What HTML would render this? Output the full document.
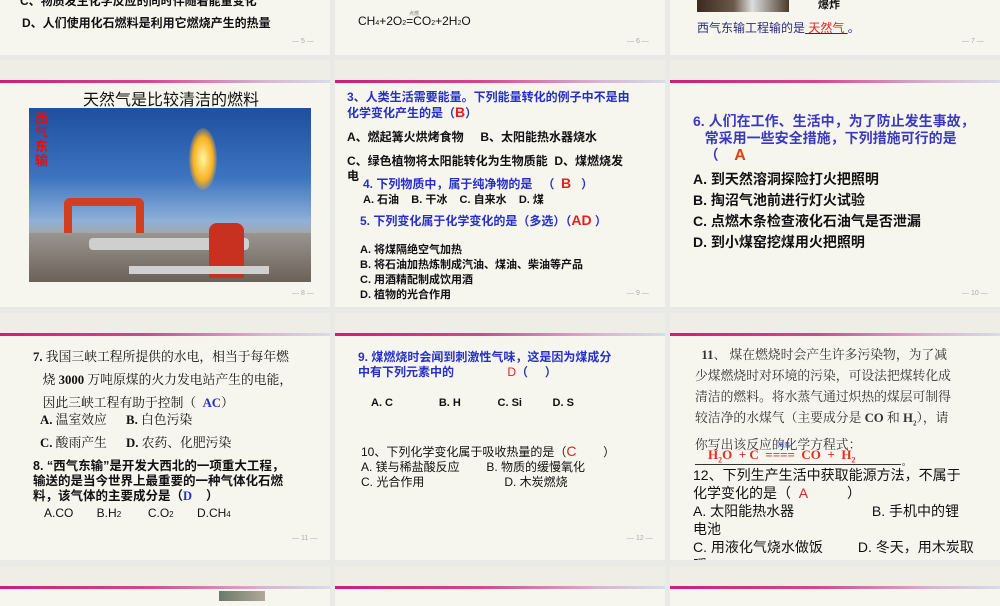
<!DOCTYPE html>
<html><head><meta charset="utf-8"><style>
*{margin:0;padding:0;box-sizing:border-box}
body{width:1000px;height:600px;background:#e9e9e5;position:relative;overflow:hidden;font-family:"Liberation Sans","Noto Sans CJK SC",sans-serif}
.s{position:absolute;background:#f7f6ee;overflow:hidden}
.top{position:absolute;left:0;right:0;top:0;background:#efeee6}
.bar{position:absolute;left:0;right:0;height:3px;background:linear-gradient(90deg,#d01c78 0%,#d2488f 45%,#d9b3d3 80%,#d9dbe8 100%)}
.t{position:absolute;white-space:nowrap;color:#111}
.b{font-weight:bold}
.blue{color:#2630c8}
.red{color:#e0201e}
.pg{position:absolute;font-size:7px;color:#aaa;white-space:nowrap}
.serif{font-family:"Liberation Serif","Noto Serif CJK SC",serif}
</style></head><body>

<!-- row 0 -->
<div class="s" style="left:0;top:0;width:330px;height:55px">
 <div class="t b" style="left:20px;top:-8px;font-size:12px">C、物质发生化学反应的同时伴随着能量变化</div>
 <div class="t b" style="left:22px;top:14px;font-size:12px">D、人们使用化石燃料是利用它燃烧产生的热量</div>
 <div class="pg" style="left:292px;top:38px">— 5 —</div>
</div>
<div class="s" style="left:335px;top:0;width:330px;height:55px">
 <div class="t" style="left:23px;top:14px;font-size:12px">CH<span style="font-size:7px">4</span>+2O<span style="font-size:7px">2</span>=CO<span style="font-size:7px">2</span>+2H<span style="font-size:7px">2</span>O</div>
 <div class="t" style="left:74px;top:10px;font-size:5px;color:#777">点燃</div>
 <div class="pg" style="left:292px;top:38px">— 6 —</div>
</div>
<div class="s" style="left:670px;top:0;width:330px;height:55px">
 <div style="position:absolute;left:27px;top:0;width:92px;height:12px;background:linear-gradient(90deg,#3a2a20,#6b5a4a 40%,#ddd 60%,#4a3a2a)"></div>
 <div class="t b" style="left:148px;top:-4px;font-size:11px">爆炸</div>
 <div class="t" style="left:27px;top:19px;font-size:12px;color:#2a2a80">西气东输工程输的是<span class="red" style="text-decoration:underline;text-decoration-color:#2a2a80">&nbsp;天然气&nbsp;</span>。</div>
 <div class="pg" style="left:292px;top:38px">— 7 —</div>
</div>

<!-- row 1 -->
<div class="s" style="left:0;top:60px;width:330px;height:247px">
 <div class="top" style="height:20px"></div><div class="bar" style="top:20px"></div>
 <div class="t" style="left:83px;top:26px;font-size:16px">天然气是比较清洁的燃料</div>
 <div style="position:absolute;left:29px;top:48px;width:282px;height:174px;background:linear-gradient(180deg,#1e4fa0 0%,#3d74c0 40%,#8fb0d8 65%,#a7a498 75%,#7a7060 100%);overflow:hidden">
  <div style="position:absolute;left:6px;top:4px;width:16px;height:60px;color:#e01010;font-weight:bold;font-size:13px;line-height:14px;white-space:normal">西气东输</div>
  <div style="position:absolute;left:160px;top:20px;width:28px;height:62px;border-radius:50%;background:radial-gradient(#fff6a0,#f8b020 50%,rgba(240,120,20,0) 75%)"></div>
  <div style="position:absolute;left:35px;top:90px;width:80px;height:50px;border:8px solid #d04020;border-bottom:none;border-radius:6px 6px 0 0"></div>
  <div style="position:absolute;left:0;top:125px;width:282px;height:49px;background:linear-gradient(180deg,#9a9590,#6b6258)"></div>
  <div style="position:absolute;left:60px;top:130px;width:160px;height:12px;background:#cfcfcf;border-radius:4px"></div>
  <div style="position:absolute;left:180px;top:115px;width:35px;height:55px;background:#c83020;border-radius:8px 8px 0 0"></div>
  <div style="position:absolute;left:100px;top:158px;width:140px;height:8px;background:#d0d0d0"></div>
 </div>
 <div class="pg" style="left:292px;top:230px">— 8 —</div>
</div>
<div class="s" style="left:335px;top:60px;width:330px;height:247px">
 <div class="top" style="height:20px"></div><div class="bar" style="top:20px"></div>
 <div class="t b blue" style="left:12px;top:30px;font-size:12px;line-height:15px">3、人类生活需要能量。下列能量转化的例子中不是由<br>化学变化产生的是（<span class="red" style="font-size:14px">B</span>）</div>
 <div class="t b" style="left:12px;top:68px;font-size:12px">A、燃起篝火烘烤食物&nbsp;&nbsp;&nbsp;&nbsp;&nbsp;B、太阳能热水器烧水</div>
 <div class="t b" style="left:12px;top:92px;font-size:12px">C、绿色植物将太阳能转化为生物质能&nbsp;&nbsp;D、煤燃烧发</div>
 <div class="t b" style="left:12px;top:107px;font-size:12px">电</div>
 <div class="t b blue" style="left:28px;top:115px;font-size:12px">4. 下列物质中，属于纯净物的是&nbsp;&nbsp;&nbsp;（&nbsp;&nbsp;<span class="red" style="font-size:14px">B</span>&nbsp;&nbsp;&nbsp;）</div>
 <div class="t b" style="left:28px;top:131px;font-size:11px">A. 石油&nbsp;&nbsp;&nbsp;&nbsp;B. 干冰&nbsp;&nbsp;&nbsp;&nbsp;C. 自来水&nbsp;&nbsp;&nbsp;&nbsp;D. 煤</div>
 <div class="t b blue" style="left:25px;top:152px;font-size:12px">5. 下列变化属于化学变化的是（多选）（<span class="red" style="font-size:14px">AD</span>&nbsp;）</div>
 <div class="t b" style="left:25px;top:183px;font-size:11px;line-height:15px">A. 将煤隔绝空气加热<br>B. 将石油加热炼制成汽油、煤油、柴油等产品<br>C. 用酒精配制成饮用酒<br>D. 植物的光合作用</div>
 <div class="pg" style="left:292px;top:230px">— 9 —</div>
</div>
<div class="s" style="left:670px;top:60px;width:330px;height:247px">
 <div class="top" style="height:20px"></div><div class="bar" style="top:20px"></div>
 <div class="t b blue" style="left:23px;top:53px;font-size:14px;line-height:17px;color:#3a3ac0">6. 人们在工作、生活中，为了防止发生事故，<br>&nbsp;&nbsp;&nbsp;常采用一些安全措施，下列措施可行的是<br>&nbsp;&nbsp;&nbsp;（&nbsp;&nbsp;&nbsp;&nbsp;<span style="color:#e04010;font-size:16px">A</span></div>
 <div class="t b" style="left:23px;top:109px;font-size:14px;line-height:21px">A. 到天然溶洞探险打火把照明<br>B. 掏沼气池前进行灯火试验<br>C. 点燃木条检查液化石油气是否泄漏<br>D. 到小煤窑挖煤用火把照明</div>
 <div class="pg" style="left:292px;top:230px">— 10 —</div>
</div>

<!-- row 2 -->
<div class="s" style="left:0;top:313px;width:330px;height:247px">
 <div class="top" style="height:20px"></div><div class="bar" style="top:20px"></div>
 <div class="t serif" style="left:33px;top:33px;font-size:12.8px;line-height:23px"><b>7.</b> 我国三峡工程所提供的水电，相当于每年燃<br>&nbsp;&nbsp;&nbsp;烧 <b>3000</b> 万吨原煤的火力发电站产生的电能，<br>&nbsp;&nbsp;&nbsp;因此三峡工程有助于控制（&nbsp;&nbsp;<b style="color:#2630c8">AC</b>）</div>
 <div class="t serif" style="left:40px;top:96px;font-size:12.8px;line-height:23px"><b>A.</b> 温室效应&nbsp;&nbsp;&nbsp;&nbsp;&nbsp;&nbsp;<b>B.</b> 白色污染<br><b>C.</b> 酸雨产生&nbsp;&nbsp;&nbsp;&nbsp;&nbsp;&nbsp;<b>D.</b> 农药、化肥污染</div>
 <div class="t b" style="left:33px;top:146px;font-size:12.5px;line-height:15px">8. “西气东输”是开发大西北的一项重大工程，<br>输送的是当今世界上最重要的一种气体化石燃<br>料，该气体的主要成分是（<span class="blue serif">D</span>&nbsp;&nbsp;&nbsp;&nbsp;）</div>
 <div class="t" style="left:44px;top:193px;font-size:12px">A.CO&nbsp;&nbsp;&nbsp;&nbsp;&nbsp;&nbsp;&nbsp;B.H<span style="font-size:8px">2</span>&nbsp;&nbsp;&nbsp;&nbsp;&nbsp;&nbsp;&nbsp;&nbsp;C.O<span style="font-size:8px">2</span>&nbsp;&nbsp;&nbsp;&nbsp;&nbsp;&nbsp;&nbsp;D.CH<span style="font-size:8px">4</span></div>
 <div class="pg" style="left:292px;top:222px">— 11 —</div>
</div>
<div class="s" style="left:335px;top:313px;width:330px;height:247px">
 <div class="top" style="height:20px"></div><div class="bar" style="top:20px"></div>
 <div class="t b blue" style="left:23px;top:37px;font-size:12px;line-height:15px">9. 煤燃烧时会闻到刺激性气味，这是因为煤成分<br>中有下列元素中的&nbsp;&nbsp;&nbsp;&nbsp;&nbsp;&nbsp;&nbsp;&nbsp;&nbsp;&nbsp;&nbsp;&nbsp;&nbsp;&nbsp;&nbsp;&nbsp;<span class="red" style="font-weight:normal">D</span>（&nbsp;&nbsp;&nbsp;&nbsp;&nbsp;）</div>
 <div class="t b" style="left:36px;top:84px;font-size:11px">A. C&nbsp;&nbsp;&nbsp;&nbsp;&nbsp;&nbsp;&nbsp;&nbsp;&nbsp;&nbsp;&nbsp;&nbsp;&nbsp;&nbsp;&nbsp;B. H&nbsp;&nbsp;&nbsp;&nbsp;&nbsp;&nbsp;&nbsp;&nbsp;&nbsp;&nbsp;&nbsp;&nbsp;C. Si&nbsp;&nbsp;&nbsp;&nbsp;&nbsp;&nbsp;&nbsp;&nbsp;&nbsp;&nbsp;D. S</div>
 <div class="t" style="left:26px;top:131px;font-size:12px;line-height:15px">10、下列化学变化属于吸收热量的是（<span class="red" style="font-size:14px">C</span>&nbsp;&nbsp;&nbsp;&nbsp;&nbsp;&nbsp;&nbsp;&nbsp;）<br>A. 镁与稀盐酸反应&nbsp;&nbsp;&nbsp;&nbsp;&nbsp;&nbsp;&nbsp;&nbsp;B. 物质的缓慢氧化<br>C. 光合作用&nbsp;&nbsp;&nbsp;&nbsp;&nbsp;&nbsp;&nbsp;&nbsp;&nbsp;&nbsp;&nbsp;&nbsp;&nbsp;&nbsp;&nbsp;&nbsp;&nbsp;&nbsp;&nbsp;&nbsp;&nbsp;&nbsp;&nbsp;&nbsp;D. 木炭燃烧</div>
 <div class="pg" style="left:292px;top:222px">— 12 —</div>
</div>
<div class="s" style="left:670px;top:313px;width:330px;height:247px">
 <div class="top" style="height:20px"></div><div class="bar" style="top:20px"></div>
 <div class="t serif" style="left:25px;top:32px;font-size:12.8px;line-height:21px;color:#333">&nbsp;&nbsp;<b>11</b>、&nbsp;煤在燃烧时会产生许多污染物，为了减<br>少煤燃烧时对环境的污染，可设法把煤转化成<br>清洁的燃料。将水蒸气通过炽热的煤层可制得<br>较洁净的水煤气（主要成分是 <b>CO</b> 和 <b>H<sub style="font-size:7px">2</sub></b>），请<br>你写出该反应的化学方程式：</div>
 <div class="t serif b" style="left:38px;top:134px;font-size:13px;color:#e03020">H<sub style="font-size:8px">2</sub>O&nbsp;&nbsp;+ C&nbsp;&nbsp;====&nbsp;&nbsp;CO&nbsp;&nbsp;+&nbsp;&nbsp;H<sub style="font-size:8px">2</sub></div>
 <div class="t" style="left:108px;top:127px;font-size:6px;color:#3040c0">高温</div>
 <div style="position:absolute;left:25px;top:151px;width:206px;height:1px;background:#333"></div>
 <div class="t" style="left:232px;top:144px;font-size:8px">。</div>
 <div class="t" style="left:23px;top:153px;font-size:14px;line-height:18px">12、下列生产生活中获取能源方法，不属于<br>化学变化的是（&nbsp;&nbsp;<span class="red">A</span>&nbsp;&nbsp;&nbsp;&nbsp;&nbsp;&nbsp;&nbsp;&nbsp;&nbsp;&nbsp;）<br>A. 太阳能热水器&nbsp;&nbsp;&nbsp;&nbsp;&nbsp;&nbsp;&nbsp;&nbsp;&nbsp;&nbsp;&nbsp;&nbsp;&nbsp;&nbsp;&nbsp;&nbsp;&nbsp;&nbsp;&nbsp;&nbsp;B. 手机中的锂<br>电池<br>C. 用液化气烧水做饭&nbsp;&nbsp;&nbsp;&nbsp;&nbsp;&nbsp;&nbsp;&nbsp;&nbsp;D. 冬天，用木炭取<br>暖</div>
</div>

<!-- row 3 -->
<div class="s" style="left:0;top:566px;width:330px;height:40px">
 <div class="top" style="height:20px"></div><div class="bar" style="top:20px"></div>
 <div style="position:absolute;left:219px;top:25px;width:46px;height:10px;background:linear-gradient(90deg,#6a7a6a,#b0a898)"></div>
</div>
<div class="s" style="left:335px;top:566px;width:330px;height:40px">
 <div class="top" style="height:20px"></div><div class="bar" style="top:20px"></div>
</div>
<div class="s" style="left:670px;top:566px;width:330px;height:40px">
 <div class="top" style="height:20px"></div><div class="bar" style="top:20px"></div>
</div>
</body></html>
